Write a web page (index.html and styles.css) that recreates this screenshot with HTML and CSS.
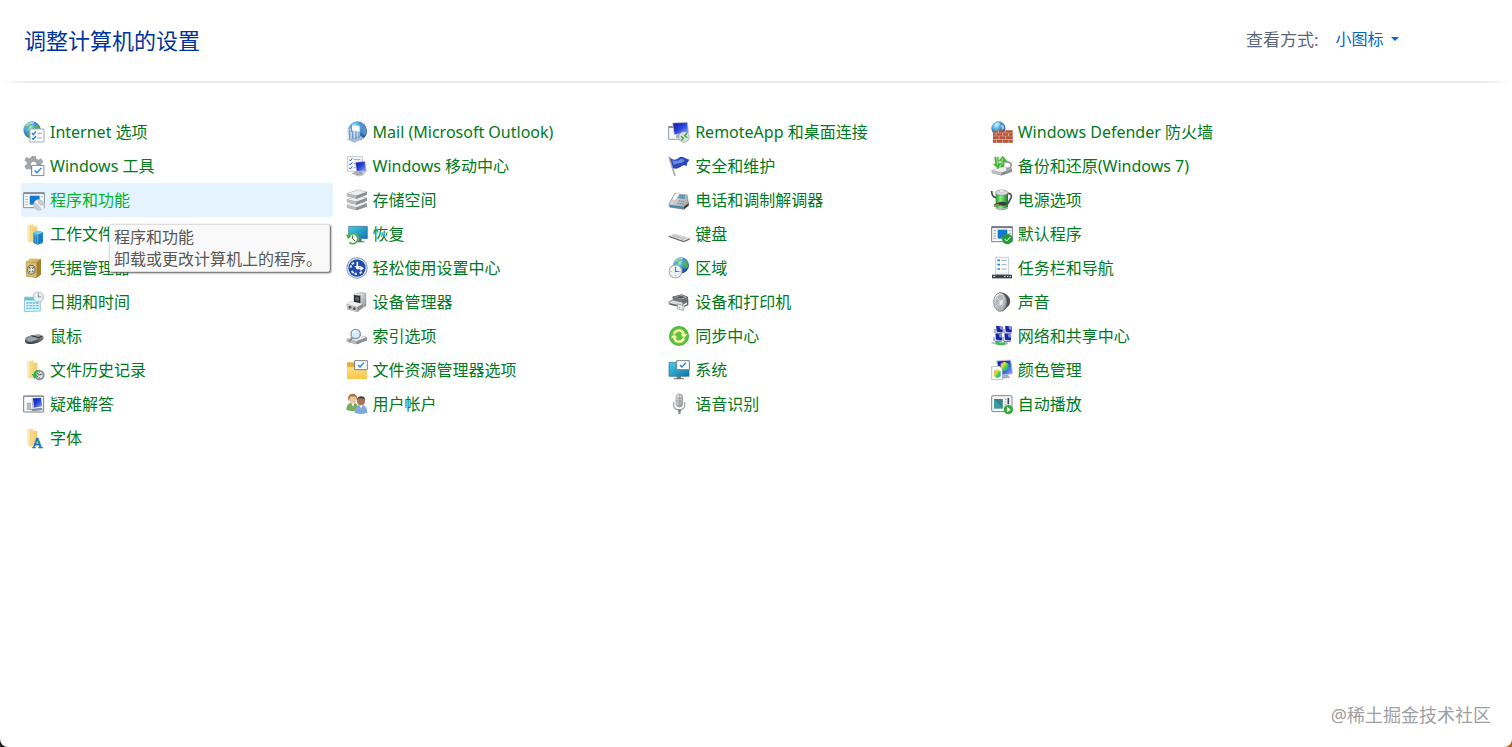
FILE: index.html
```html
<!DOCTYPE html>
<html lang="zh-CN">
<head>
  <meta charset="UTF-8" />
  <meta name="viewport" content="width=device-width, initial-scale=1.0" />
  <title>控制面板</title>
  <link rel="stylesheet" href="styles.css">
</head>
<body>
  <!-- shared icon parts -->
  <svg class="defs" aria-hidden="true">
    <defs>
      <radialGradient id="gGlobe" cx=".35" cy=".3" r=".75"><stop offset="0" stop-color="#c4efff"/><stop offset=".4" stop-color="#4ba6df"/><stop offset="1" stop-color="#173f8e"/></radialGradient>
      <linearGradient id="gFolder" x1="0" x2="1"><stop offset="0" stop-color="#fbe6a0"/><stop offset="1" stop-color="#efcb6c"/></linearGradient>
      <linearGradient id="gFolder2" x1="0" y1="0" x2="0" y2="1"><stop offset="0" stop-color="#ffe08a"/><stop offset="1" stop-color="#f7c648"/></linearGradient>
      <linearGradient id="gMetal" x1="0" y1="0" x2="1" y2="1"><stop offset="0" stop-color="#fafafa"/><stop offset="1" stop-color="#8d8f92"/></linearGradient>
      <linearGradient id="gDark" x1="0" y1="0" x2="0" y2="1"><stop offset="0" stop-color="#a6adb3"/><stop offset="1" stop-color="#34393e"/></linearGradient>
      <linearGradient id="gBlue" x1="0" y1="0" x2="1" y2="1"><stop offset="0" stop-color="#0c12a0"/><stop offset=".5" stop-color="#2b45dc"/><stop offset="1" stop-color="#9db8f8"/></linearGradient>
      <linearGradient id="gCyan" x1="0" y1="0" x2="1" y2="1"><stop offset="0" stop-color="#3fd0e6"/><stop offset="1" stop-color="#1272a8"/></linearGradient>
      <linearGradient id="gGreen" x1="0" y1="0" x2="1" y2="0"><stop offset="0" stop-color="#1f9a35"/><stop offset=".4" stop-color="#8cec7c"/><stop offset="1" stop-color="#14772a"/></linearGradient>
      <linearGradient id="gGold" x1="0" y1="0" x2="1" y2="1"><stop offset="0" stop-color="#ead489"/><stop offset="1" stop-color="#a67d24"/></linearGradient>
      <linearGradient id="gHue" x1="0" y1="0" x2="1" y2="1"><stop offset="0" stop-color="#f02ac0"/><stop offset=".3" stop-color="#ffdf20"/><stop offset=".6" stop-color="#35d65a"/><stop offset="1" stop-color="#1f7cf0"/></linearGradient>
      <symbol id="globe" viewBox="0 0 50 50"><circle cx="25" cy="25" r="24" fill="url(#gGlobe)"/><path d="M8 14Q13 5 22 4l3 6-6 4-3 7-7 3zM32 13l9-4q8 9 7 19l-8 7-6-5-6-8zM13 32l8 2 2 7-5 6Q11 41 9 35z" fill="#54b748" opacity=".8"/><path d="M10 13Q18 4 30 5" stroke="#fff" stroke-width="4" opacity=".5" fill="none"/></symbol>
      <symbol id="clock" viewBox="0 0 40 40"><circle cx="20" cy="20" r="18" fill="#edf1f4" stroke="#a6afb7" stroke-width="3"/><path d="M20 7v13h9" fill="none" stroke="#62707d" stroke-width="3"/><path d="M6 20h3M31 20h3M20 31v3" stroke="#8b98a4" stroke-width="2"/></symbol>
      <symbol id="card" viewBox="0 0 42 36"><path d="M2 2h38v32H2z" fill="#fff" stroke="#737980" stroke-width="3"/><path d="M11 18l7 7 14-15" fill="none" stroke="#1c82dc" stroke-width="4"/></symbol>
      <symbol id="folder" viewBox="0 0 34 58"><path d="M1 3l19-2v6l12 1v46H8l-7-4z" fill="url(#gFolder)"/><path d="M1 3l9 3v51l-9-6z" fill="#fbedb9"/><path d="M10 6v51" stroke="#e0b54c" stroke-width="1"/></symbol>
      <symbol id="pc" viewBox="0 0 40 40"><path d="M12 2l26 3v22L14 25z" fill="#17239f"/><path d="M25 5l12 2v10l-9-2z" fill="#7f9af0"/><path d="M3 13l8 1v17l-8-2z" fill="#aab4c2"/><path d="M8 29l26-2 4 6-24 3z" fill="#6e7fc0"/></symbol>
      <symbol id="drive" viewBox="0 0 64 30"><path d="M1 13L36 1l27 7v9L31 29 1 21z" fill="#888b8e"/><path d="M1 13L36 1l27 7-32 12z" fill="#eeeeef" stroke="#a5a7a9"/><path d="M1 13l30 7v9L1 21z" fill="#b9bcbf"/><path d="M31 20l32-12v9L31 29z" fill="#8e9194"/></symbol>
    </defs>
  </svg>

  <div class="window">
    <header class="header">
      <h1>调整计算机的设置</h1>
      <div class="view">
        <label for="viewMode">查看方式:</label>
        <div class="view-select">
          <select id="viewMode">
            <option>类别</option>
            <option>大图标</option>
            <option selected>小图标</option>
          </select>
          <span class="arrow"></span>
        </div>
      </div>
    </header>

    <main class="items">
      <ul>
        <li><a href="#"><svg viewBox="0 0 66 66"><use href="#globe" x="0" y="0" width="54" height="54"/><path d="M21 24h42v39H21z" fill="#fafbfd" stroke="#a4adb8" stroke-width="3"/><path d="M27 37l4 4 8-10M27 51l4 4 8-10" fill="none" stroke="#2b7bd0" stroke-width="4"/><path d="M43 37h14M43 51h14" stroke="#9eabba" stroke-width="3"/></svg>Internet 选项</a></li>
        <li><a href="#"><svg viewBox="0 0 66 66"><path d="M26 3h12l2 8 7 3 7-4 7 10-6 6v8l-8 12-10 6H26l-2-8-6-3-8 3-6-10 7-6v-6l-7-6 6-10 8 4 6-3z" fill="#a2a6aa"/><circle cx="32" cy="28" r="8" fill="#fff"/><use href="#card" x="24" y="29" width="41" height="35"/></svg>Windows 工具</a></li>
        <li class="active">
          <a href="#" aria-describedby="tip"><svg viewBox="0 0 66 66"><path d="M2 11h62v45H2z" fill="#fff" stroke="#868d96" stroke-width="3"/><path d="M2 13h62" stroke="#868d96" stroke-width="5"/><path d="M7 23h8M7 31h8M7 39h8M7 47h8M53 23h7" stroke="#a5adb6" stroke-width="3"/><path d="M20 20h30v27H20z" fill="#1578d0"/><circle cx="48" cy="48" r="17" fill="#c5ccd5"/><path d="M48 48L34 39l8-7zM48 48l16 4-7 10z" fill="#f4f8fc"/><circle cx="48" cy="48" r="4" fill="#f6fafc" stroke="#a7b0b8"/></svg>程序和功能</a>
          <div class="tooltip" id="tip" role="tooltip">程序和功能<br>卸载或更改计算机上的程序。</div>
        </li>
        <li><a href="#"><svg viewBox="0 0 66 66"><use href="#folder" x="11" y="3" width="34" height="58"/><path d="M30 30l16-7 14 5v31l-15 6-15-6z" fill="#2087c9"/><path d="M30 30l15 5v30l-15-6z" fill="#46aee4"/><path d="M30 30l16-7 14 5-15 7z" fill="#75cbef"/><path d="M35 37v24M40 39v24M50 35v27M55 33v27" stroke="#1669ac" stroke-width="2"/></svg>工作文件夹</a></li>
        <li><a href="#"><svg viewBox="0 0 66 66"><path d="M9 14L21 4l33 2v46L41 62 10 58z" fill="url(#gGold)"/><path d="M41 17L54 6v46L41 62z" fill="#a47e2b"/><path d="M9 14l32 3v45L10 58z" fill="#d7bd70" stroke="#93702a"/><ellipse cx="25" cy="38" rx="13" ry="15" fill="#746d5a"/><ellipse cx="25" cy="38" rx="10" ry="12" fill="#cfcbbb"/><path d="M18 30l14 16M32 30L18 46" stroke="#55503f" stroke-width="3"/><circle cx="25" cy="38" r="4" fill="#f5f3e8"/></svg>凭据管理器</a></li>
        <li><a href="#"><svg viewBox="0 0 66 66"><path d="M5 18l47 2v40L4 62z" fill="#d6f2fa" stroke="#78aabc" stroke-width="2"/><path d="M5 19h47v9H5z" fill="#64bfd9"/><path d="M10 36h37M10 44h37M10 52h37" stroke="#5fc1dd" stroke-width="4"/><path d="M18 30v27M28 30v27M38 30v27" stroke="#e9f9fd" stroke-width="2"/><use href="#clock" x="29" y="1" width="34" height="34"/></svg>日期和时间</a></li>
        <li><a href="#"><svg viewBox="0 0 66 66"><path d="M6 44Q8 34 26 31l20-4q16 4 16 12-1 8-18 14-18 6-30 3Q4 53 6 44z" fill="url(#gDark)"/><path d="M10 43q10-9 25-10l12 5q-12 11-27 12-10-1-10-7z" fill="#9aa3aa"/><path d="M25 32l22 6 12-5" fill="none" stroke="#23282c" stroke-width="3"/></svg>鼠标</a></li>
        <li><a href="#"><svg viewBox="0 0 66 66"><use href="#folder" x="11" y="3" width="34" height="58"/><circle cx="49" cy="48" r="16" fill="#989ca0"/><circle cx="49" cy="48" r="12" fill="#e1e4e5" stroke="#6d7174" stroke-width="2"/><path d="M41 40l8 8 9-3M41 55l5-5M49 38v3M49 55v3" stroke="#4b5054" stroke-width="3" fill="none"/><path d="M46 33q-13 0-14 12l-6 0 9 14 10-12-6-1q1-7 7-8z" fill="#35b449"/></svg>文件历史记录</a></li>
        <li><a href="#"><svg viewBox="0 0 66 66"><path d="M2 9h60v48H2z" fill="#f8f9fb" stroke="#7b828b" stroke-width="3"/><path d="M2 10h60" stroke="#8f969f" stroke-width="4"/><path d="M30 16l24-1 4 25-26 4z" fill="url(#gBlue)"/><path d="M26 17l4-1 3 28-5 2z" fill="#bac0c8"/><path d="M13 30h10v20H13z" fill="#b6bdc6" stroke="#6c737b"/><path d="M22 48l34-4 4 7-32 4z" fill="#858e99"/></svg>疑难解答</a></li>
        <li><a href="#"><svg viewBox="0 0 66 66"><use href="#folder" x="11" y="4" width="34" height="58"/><text class="letter" x="27" y="62">A</text></svg>字体</a></li>
      </ul>

      <ul>
        <li><a href="#"><svg viewBox="0 0 66 66"><circle cx="34" cy="30" r="29" fill="url(#gGlobe)"/><path d="M46 6q17 10 16 28l-8 12-6-18z" fill="#5c8fca"/><path d="M3 27l20-8 19 6v35l-17 5L3 55z" fill="#dde8f5" opacity=".8"/><path d="M3 55l22 10 30-14-13-7z" fill="#a5bedb"/><path d="M11 27v27M20 26v29M30 27v28M39 28v24" stroke="#668cbb" stroke-width="3"/><path d="M18 12l23 3v17l-23-3z" fill="#fff" stroke="#88abd2"/><path d="M16 13v20" stroke="#d05c62" stroke-width="3"/></svg>Mail (Microsoft Outlook)</a></li>
        <li><a href="#"><svg viewBox="0 0 66 66"><path d="M4 5h45v44H4z" fill="#f7f9fc" stroke="#a9b1bd" stroke-width="2"/><path d="M10 14l3 4 6-8M10 26l3 4 6-8M10 38l3 4 6-8" fill="none" stroke="#315cc8" stroke-width="3"/><path d="M23 14h20M23 26h8M23 38h6" stroke="#9aa6b5" stroke-width="3"/><path d="M28 22l29-3 4 28-29 3z" fill="url(#gBlue)" stroke="#c2cbd6" stroke-width="2"/><path d="M18 55l16-6 27-2-10 13-14 3z" fill="#cbd0d6" stroke="#737a82"/><path d="M24 55l24-3M30 59l20-3" stroke="#737a82" stroke-width="2"/></svg>Windows 移动中心</a></li>
        <li><a href="#"><svg viewBox="0 0 66 66"><use href="#drive" x="1" y="36" width="63" height="29"/><use href="#drive" x="1" y="19" width="63" height="29"/><use href="#drive" x="1" y="1" width="63" height="29"/><path d="M33 25v3M33 43v3M33 60v3" stroke="#38c130" stroke-width="4"/></svg>存储空间</a></li>
        <li><a href="#"><svg viewBox="0 0 66 66"><path d="M8 10h56v37H8z" fill="url(#gCyan)" stroke="#386a7d" stroke-width="2"/><path d="M36 48h11v7h9v3H29v-3h7z" fill="#60707a"/><circle cx="21" cy="47" r="17" fill="#fff"/><path d="M8 39a15 15 0 1 1 2 19" fill="none" stroke="#4bad3e" stroke-width="5"/><path d="M0 34l17 4L6 49z" fill="#4bad3e"/><path d="M20 37v11l8 6" fill="none" stroke="#4e5559" stroke-width="3"/></svg>恢复</a></li>
        <li><a href="#"><svg viewBox="0 0 66 66"><circle cx="33" cy="33" r="32" fill="#8f9dbc"/><circle cx="33" cy="33" r="29" fill="#f4f7ff"/><circle cx="33" cy="33" r="26" fill="#214bad"/><path d="M34 14v20h18" fill="none" stroke="#fff" stroke-width="5"/><path d="M25 27h18l-9 10zM43 26v17l10-9z" fill="#fff"/><path d="M24 17Q13 23 14 35M17 42q7 10 18 9M41 49l8-6" fill="none" stroke="#dce8ff" stroke-width="6" stroke-dasharray="8 3"/></svg>轻松使用设置中心</a></li>
        <li><a href="#"><svg viewBox="0 0 66 66"><path d="M23 10l20-6 17 3v38L40 54 24 45z" fill="url(#gMetal)" stroke="#707376"/><path d="M24 12l19 2v24l-19-3z" fill="#282c2f"/><path d="M28 17l11 1v11l-11-1z" fill="#606569"/><path d="M2 39l13-8 35 7v13l-16 12L3 55z" fill="#8b8d8f"/><path d="M2 39l13-8 35 7-16 10z" fill="#ececed"/><path d="M2 39l32 9v15L3 55z" fill="#c1c3c5"/><circle cx="12" cy="49" r="4" fill="#4d5052"/><circle cx="25" cy="53" r="4" fill="#4d5052"/></svg>设备管理器</a></li>
        <li><a href="#"><svg viewBox="0 0 66 66"><use href="#drive" x="1" y="29" width="63" height="30"/><path d="M20 38L9 50" stroke="#7c838b" stroke-width="5"/><circle cx="29" cy="27" r="14" fill="#d4ebfb" stroke="#8795a4" stroke-width="4"/><path d="M20 24q3-8 12-7" fill="none" stroke="#fff" stroke-width="4"/><path d="M35 54h5" stroke="#3cb34a" stroke-width="3"/></svg>索引选项</a></li>
        <li><a href="#"><svg viewBox="0 0 66 66"><path d="M3 10h20l7 7h32v43H3z" fill="#e8ae32"/><path d="M3 24h20l6-5h33v41H3z" fill="url(#gFolder2)"/><path d="M26 5h38v27H26z" fill="#fff" stroke="#788088" stroke-width="3"/><path d="M36 18l6 6 12-13" fill="none" stroke="#1c82dc" stroke-width="4"/></svg>文件资源管理器选项</a></li>
        <li><a href="#"><svg viewBox="0 0 66 66"><path d="M1 51q0-20 14-22h12q9 4 12 22-18 7-38 0z" fill="#79ac5d"/><circle cx="20" cy="18" r="12" fill="#edc49b"/><path d="M7 24Q3 3 20 2q16 0 13 20l-4-11-15-1z" fill="#a8753d"/><path d="M16 31l5 10 5-10z" fill="#fff"/><path d="M26 59q0-19 14-23h12q11 5 12 23-18 8-38 0z" fill="#7da9dc"/><circle cx="45" cy="25" r="12" fill="#a77552"/><path d="M33 21q1-11 12-11 12 1 13 11l-6-4-13-1z" fill="#4a3d38"/><path d="M41 37l4 10 6-10z" fill="#edf5ff"/></svg>用户帐户</a></li>
      </ul>

      <ul>
        <li><a href="#"><svg viewBox="0 0 66 66"><path d="M2 17h36v38H2z" fill="#f5f7fa" stroke="#939ba6" stroke-width="3"/><path d="M2 18h36" stroke="#788390" stroke-width="5"/><path d="M14 6l44-2 4 32-43 5z" fill="url(#gBlue)" stroke="#c5cdd8" stroke-width="2"/><path d="M26 41l15-2 5 10-23 2z" fill="#a2abb6"/><circle cx="48" cy="48" r="16" fill="#dce0e2" stroke="#9ca3a8" stroke-width="2"/><path d="M39 46l7 6-6 7M57 37l-7 7 8 6" fill="none" stroke="#35aa3b" stroke-width="4"/></svg>RemoteApp 和桌面连接</a></li>
        <li><a href="#"><svg viewBox="0 0 66 66"><path d="M3 5l18 58" stroke="#a4aab3" stroke-width="5"/><path d="M6 8q14 12 26 1 8-8 18 0l14 5q-8 9-8 19-9-5-19 3-11 8-22 3z" fill="#2946bd"/><path d="M12 15q14 6 24-2 7-5 14 3-5 9-16 9-9 0-17 5z" fill="#819fe9" opacity=".75"/></svg>安全和维护</a></li>
        <li><a href="#"><svg viewBox="0 0 66 66"><path d="M3 45L20 14l37 4 5 27-14 16L4 54z" fill="url(#gMetal)" stroke="#777d84" stroke-width="2"/><path d="M17 20l10-9 8 3-14 22-9-3z" fill="#fcfcfd" stroke="#858b92"/><path d="M34 17l18 2-2 12-21-3z" fill="#5b9bc8"/><path d="M32 35l18 3M29 42l19 3" stroke="#7b8794" stroke-width="3" stroke-dasharray="4 2"/><path d="M5 47l42 6v7L5 54z" fill="#4689ad"/><path d="M48 53l14-10v7L48 61z" fill="#32383e"/></svg>电话和调制解调器</a></li>
        <li><a href="#"><svg viewBox="0 0 66 66"><path d="M2 39l19-6 44 13v4L47 58 2 42z" fill="#62676a"/><path d="M2 38l19-6 44 14-18 8z" fill="#e6e7e8"/><path d="M12 38l36 12M18 36l36 11" stroke="#a3a7aa" stroke-width="3" stroke-dasharray="3 1"/></svg>键盘</a></li>
        <li><a href="#"><svg viewBox="0 0 66 66"><use href="#globe" x="14" y="0" width="50" height="50"/><use href="#clock" x="1" y="22" width="43" height="43"/></svg>区域</a></li>
        <li><a href="#"><svg viewBox="0 0 66 66"><path d="M14 18l27-7 19 8v14l-17 9-29-8z" fill="#777c80"/><path d="M14 18l27-7 19 8-19 8z" fill="#b9bcbf" stroke="#474b4f" stroke-width="2"/><path d="M21 18l20-4 10 5-11 4z" fill="#555b60"/><path d="M3 32l12-5 31 7-3 13L3 39z" fill="#d8dadc" stroke="#5c6165" stroke-width="2"/><path d="M6 39l34 8M43 34l16-7v14l-14 7" stroke="#5d6267" stroke-width="4" fill="none"/><path d="M28 39l21 6-3 14-18-6z" fill="#f4f5f5" stroke="#85898c" stroke-width="2"/><path d="M35 45v8M43 47v8" stroke="#9a9ea1" stroke-width="2"/></svg>设备和打印机</a></li>
        <li><a href="#"><svg viewBox="0 0 66 66"><circle cx="33" cy="33" r="30" fill="#43af37"/><circle cx="33" cy="33" r="27" fill="#62c440"/><path d="M18 26q6-11 17-10 9 1 13 13M48 40q-6 11-17 10-9-1-13-13" fill="none" stroke="#fff8ad" stroke-width="7"/><path d="M38 28h20L48 39zM8 38h20L18 27z" fill="#fff8ad"/></svg>同步中心</a></li>
        <li><a href="#"><svg viewBox="0 0 66 66"><path d="M3 10h60v42H3z" fill="url(#gCyan)" stroke="#2b718e" stroke-width="2"/><path d="M26 52h13v6h9v3H17v-3h9z" fill="#65737c"/><path d="M26 5h38v27H26z" fill="#fff" stroke="#788088" stroke-width="3"/><path d="M36 18l6 6 12-13" fill="none" stroke="#1c82dc" stroke-width="4"/></svg>系统</a></li>
        <li><a href="#"><svg viewBox="0 0 66 66"><path d="M17 27v10q1 13 17 14 16-1 16-14V27" fill="none" stroke="#a4a8ad" stroke-width="4"/><rect x="24" y="3" width="20" height="39" rx="10" fill="url(#gMetal)" stroke="#858a90" stroke-width="2"/><path d="M25 16h18M25 24h18M34 5v36" stroke="#8f949a" stroke-width="2"/><path d="M29 49h11l-3 14h-5z" fill="#858b92"/></svg>语音识别</a></li>
      </ul>

      <ul>
        <li><a href="#"><svg viewBox="0 0 66 66"><circle cx="22" cy="22" r="21" fill="url(#gGlobe)"/><path d="M12 8l10-5 5 6-9 6zM29 12l8 1 4 9-7 5z" fill="#d5effb" opacity=".7"/><path d="M6 31l18-3v4h41v33H6z" fill="#d8c0b0"/><path d="M6 29h15v6H6zM23 28h18v7H23zM43 28h22v7H43zM6 37h8v7H6zM16 37h18v7H16zM36 37h16v7H36zM54 37h11v7H54zM6 46h17v8H6zM25 46h18v8H25zM45 46h20v8H45zM6 56h9v9H6zM17 56h17v9H17zM36 56h17v9H36zM55 56h10v9H55z" fill="#b5533a"/></svg>Windows Defender 防火墙</a></li>
        <li><a href="#"><svg viewBox="0 0 66 66"><use href="#drive" x="1" y="32" width="63" height="32"/><path d="M40 20q20 0 21 10 0 10-16 13" fill="none" stroke="#92979c" stroke-width="5"/><path d="M11 6l11 1 1 19 7-2-8 17L7 28l6-1zM29 36l2-19-8 1L35 3l12 14-7 1-1 17z" fill="#43ba37" stroke="#287f28"/><path d="M14 8l4 1 1 20M34 10l-1 18" stroke="#a5e785" stroke-width="3" fill="none"/><path d="M36 55h6" stroke="#39aa3e" stroke-width="4"/></svg>备份和还原(Windows 7)</a></li>
        <li><a href="#"><svg viewBox="0 0 66 66"><path d="M2 6q0 19 14 20M48 13q17-1 12 14l-10 18" fill="none" stroke="#4a5151" stroke-width="5"/><path d="M14 10v44q18 12 37 0V10z" fill="url(#gGreen)"/><ellipse cx="32" cy="11" rx="19" ry="8" fill="#d9dddd" stroke="#858c8c" stroke-width="2"/><path d="M26 4q6-5 12 0v6H26z" fill="#f1f3f3" stroke="#8f9595"/><path d="M14 53q18 12 37 0v6q-18 10-37 0z" fill="#a9b0ae"/><path d="M10 45l19-7 14 1 7 5-11 6-17-1-12 5z" fill="#393e3e"/><path d="M11 50l12-4" stroke="#cf9c50" stroke-width="4"/></svg>电源选项</a></li>
        <li><a href="#"><svg viewBox="0 0 66 66"><path d="M2 11h62v45H2z" fill="#fff" stroke="#747c86" stroke-width="3"/><path d="M2 13h62" stroke="#747c86" stroke-width="5"/><path d="M7 23h8M7 31h8M7 39h8M7 47h8M53 23h7M53 31h7" stroke="#8e99a5" stroke-width="3"/><path d="M20 20h29v27H20z" fill="#1578d0"/><circle cx="49" cy="48" r="16" fill="#269b39"/><path d="M41 48l6 6 11-12" fill="none" stroke="#fff" stroke-width="3"/></svg>默认程序</a></li>
        <li><a href="#"><svg viewBox="0 0 66 66"><path d="M14 1h39v51H14z" fill="#f8fafb" stroke="#aeb4ba" stroke-width="2"/><path d="M19 10h8M19 23h8M19 36h8" stroke="#258bd8" stroke-width="5"/><path d="M31 10h16M31 23h16M31 36h16" stroke="#a6b1ba" stroke-width="3"/><path d="M3 53h60v11H3z" fill="#3a4046"/><path d="M7 58h6M39 58h5M48 58h4M56 58h4" stroke="#edf1f4" stroke-width="3"/></svg>任务栏和导航</a></li>
        <li><a href="#"><svg viewBox="0 0 66 66"><path d="M24 4q20 0 31 16 6 13-2 24L34 62z" fill="#4c5053"/><ellipse cx="27" cy="33" rx="19" ry="28" fill="url(#gMetal)" stroke="#8d9194" stroke-width="3"/><ellipse cx="27" cy="34" rx="14" ry="22" fill="#b4b7b9"/><path d="M18 21l14 13-13 12M32 34l6-12" stroke="#e0e2e2" stroke-width="3" fill="none"/><ellipse cx="30" cy="35" rx="5" ry="8" fill="#e9eaeb"/></svg>声音</a></li>
        <li><a href="#"><svg viewBox="0 0 66 66"><use href="#pc" x="6" y="1" width="31" height="31"/><use href="#pc" x="33" y="1" width="31" height="31"/><use href="#pc" x="4" y="25" width="31" height="31"/><use href="#pc" x="31" y="25" width="31" height="31"/><path d="M2 53l28 5 21-3M42 54v8" stroke="#b4bdc0" stroke-width="5" fill="none"/><path d="M14 54l16 3 12-2" stroke="#35b857" stroke-width="8" fill="none"/></svg>网络和共享中心</a></li>
        <li><a href="#"><svg viewBox="0 0 66 66"><path d="M17 6l42-3 6 41-39 6z" fill="url(#gBlue)" stroke="#bdc8d8" stroke-width="3"/><path d="M29 13l12-5 12 7v15l-12 7-12-7z" fill="url(#gHue)"/><path d="M33 49l17-2 8 9-29 4z" fill="#a8b0b9"/><path d="M2 22h24l8 8v32H2z" fill="#fff" stroke="#9ba3ae" stroke-width="2"/><path d="M9 37l10-6 10 6v14l-10 7-10-7z" fill="url(#gHue)"/></svg>颜色管理</a></li>
        <li><a href="#"><svg viewBox="0 0 66 66"><rect x="2" y="8" width="61" height="48" rx="4" fill="#f6f7f8" stroke="#7e878f" stroke-width="3"/><path d="M9 18h26v29H9z" fill="#3c9aa6"/><path d="M9 18h26v29z" fill="#37776f" opacity=".6"/><path d="M41 19h5M41 27h5M41 35h5" stroke="#929ca5" stroke-width="3"/><path d="M52 15v19" stroke="#34485a" stroke-width="5"/><circle cx="52" cy="50" r="14" fill="#39ac38"/><path d="M48 42l11 8-11 8z" fill="#fff"/></svg>自动播放</a></li>
      </ul>
    </main>

    <div class="watermark">@稀土掘金技术社区</div>
  </div>
</body>
</html>
```
FILE: styles.css
```css
* {
  margin: 0; padding: 0; box-sizing: border-box;
}
html {
  background: linear-gradient(to right, #222, #b5651d);
}
body {
  font-family: 'Noto Sans', 'Noto Sans CJK SC', sans-serif;
  font-size: 16px;
  color: #007a1c;
}
.defs {
  position: absolute;
  width: 0;
  height: 0;
}
.window {
  position: relative;
  min-height: 100vh;
  background: #fff;
  border-radius: 0 0 8px 8px;
}
.header {
  display: flex;
  justify-content: space-between;
  align-items: center;
  height: 83px;
  padding: 0 7.5% 4px 24px;
  border-bottom: 2px solid;
  border-image: linear-gradient(to right, #fff, #e6eaef 2%, #e6eaef 98%, #fff) 1;
}
h1 {
  font-size: 22px;
  font-weight: 400;
  color: #003399;
}
.view {
  display: flex;
  align-items: center;
  gap: 17px;
}
.view label {
  font-size: 17px;
  color: #5b6579;
}
.view-select {
  display: flex;
  align-items: center;
  gap: 6px;
}
select {
  appearance: none;
  border: none;
  background: none;
  font: inherit;
  color: #0066cc;
  cursor: pointer;
}
.arrow {
  border: 4px solid transparent;
  border-top-color: #0066cc;
  border-bottom: none;
}
.items {
  display: grid;
  grid-template-columns: repeat(4, 1fr);
  gap: 11px;
  padding: 32px 14% 60px 21px;
}
ul {
  list-style: none;
}
li {
  position: relative;
}
li a {
  display: flex;
  align-items: center;
  gap: 5px;
  height: 34px;
  padding-left: 2px;
  border-radius: 3px;
  color: #007a1c;
  line-height: 22px;
  text-decoration: none;
  white-space: nowrap;
}
li a svg {
  flex: none;
  width: 22px;
  height: 22px;
  overflow: visible;
}
li.active a {
  background: #e5f3ff;
  color: #00b32d;
}
li a:hover {
  background: #e5f3ff;
}
.letter {
  font: 44px 'Liberation Serif', serif;
  fill: #1d73b8;
  stroke: #1d73b8;
  stroke-width: 2px;
}
.tooltip {
  position: absolute;
  top: 41px;
  left: 88px;
  z-index: 1;
  padding: 1px 7px 1px 4px;
  background: #f9f9f9;
  border: 1px solid #dedede;
  border-radius: 2px;
  box-shadow: 1px 1px 2px #555;
  color: #575757;
  line-height: 22px;
  white-space: nowrap;
}
.watermark {
  position: absolute;
  right: 21px;
  bottom: 20px;
  font-size: 18px;
  color: #a0a0a0;
}
```
